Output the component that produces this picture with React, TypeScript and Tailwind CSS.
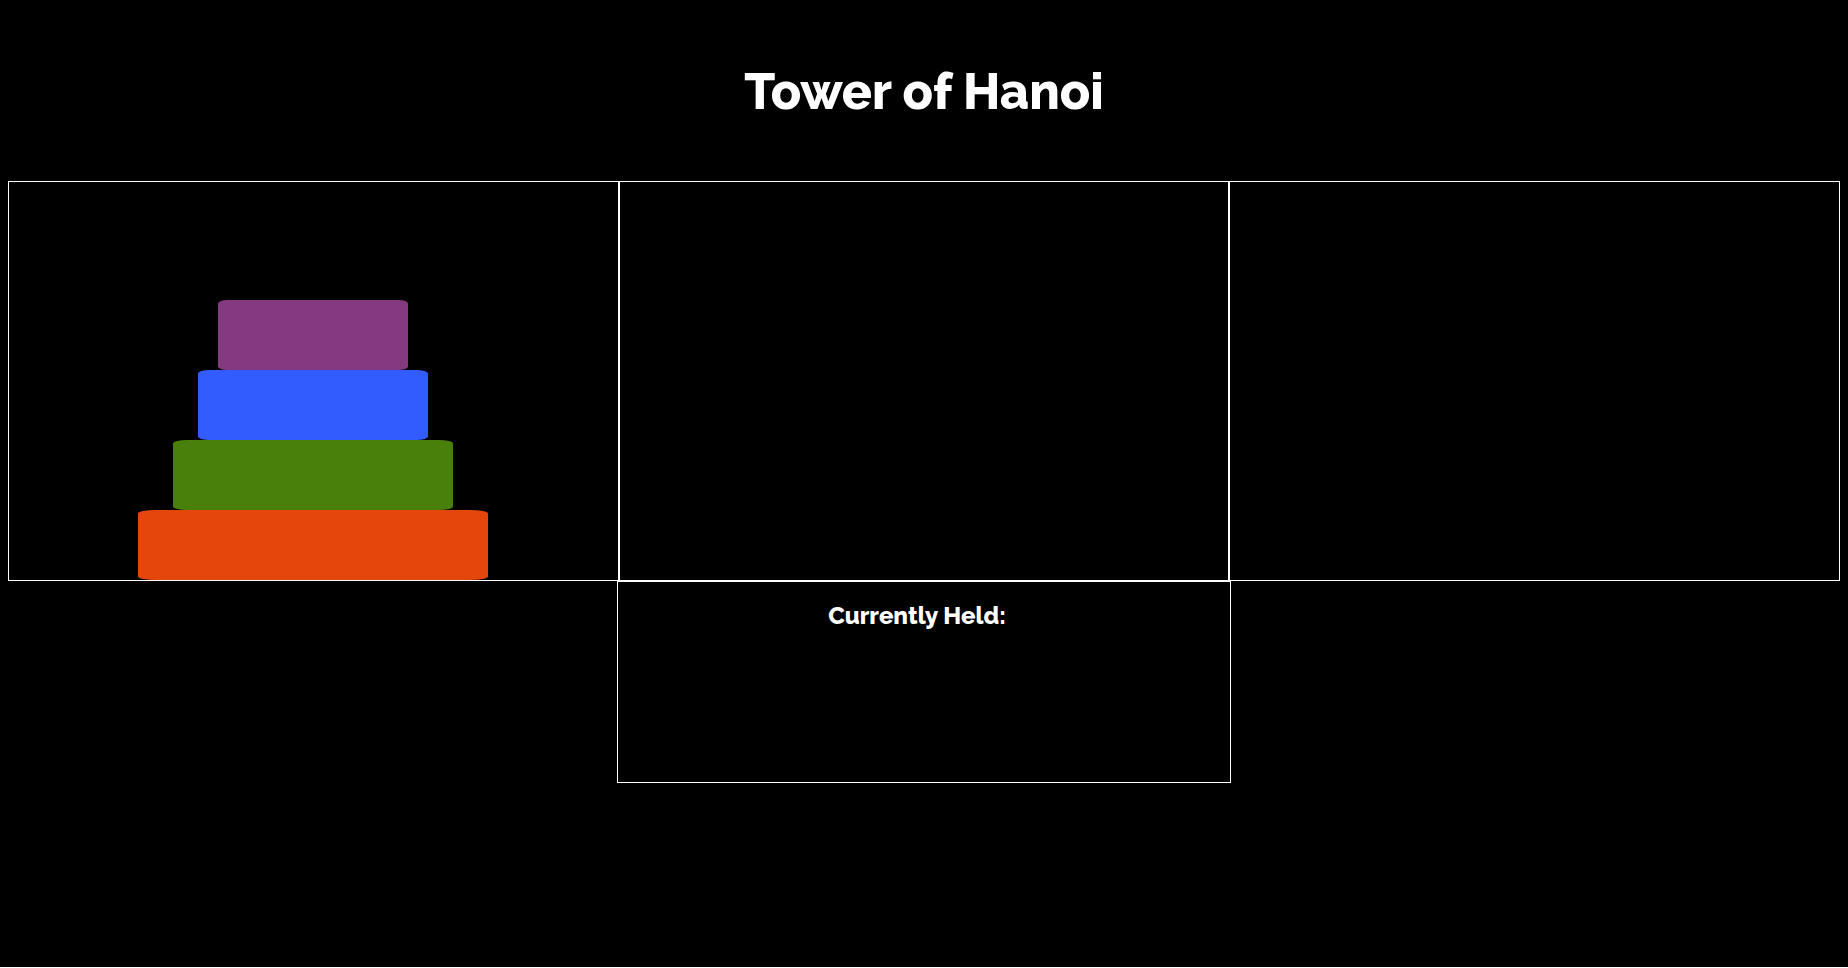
const disks = [
  { name: "Purple disk", style: "w-[190px] bg-[#853a80]" },
  { name: "Blue disk", style: "w-[230px] bg-[#335cff]" },
  { name: "Green disk", style: "w-[280px] bg-[#49800b]" },
  { name: "Orange disk", style: "w-[350px] bg-[#e5460b]" },
];

const towers = [disks, [], []];

export default function App() {
  return (
    <div className="min-h-[calc(100vh-1px)] bg-black px-2 font-['Raleway','Lato',sans-serif] font-extrabold text-white">
      <h1 className="pt-[62px] pb-[59px] text-center text-[50px] leading-[60px]">Tower of Hanoi</h1>
      <main>
        <div className="grid grid-cols-3">
          {towers.map((stack, index) => (
            <section
              key={index}
              aria-label={`Tower ${index + 1}`}
              className="flex h-[400px] flex-col items-center justify-end border border-white"
            >
              {stack.map((disk) => (
                <div
                  key={disk.name}
                  role="img"
                  aria-label={disk.name}
                  className={`h-[70px] rounded-[5%] ${disk.style}`}
                />
              ))}
            </section>
          ))}
        </div>
        <section className="mx-auto box-content h-[200px] w-[calc(100%/3+2px)] border border-white">
          <h2 className="mr-3.5 pt-5 text-center text-2xl leading-7">Currently Held:</h2>
        </section>
      </main>
    </div>
  );
}
